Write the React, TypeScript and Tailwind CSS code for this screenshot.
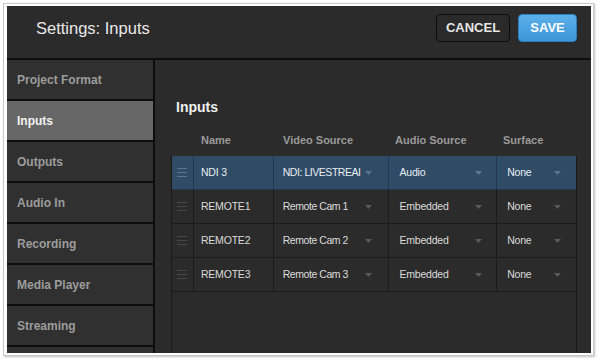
import React from "react";

const navItems = [
  "Project Format",
  "Inputs",
  "Outputs",
  "Audio In",
  "Recording",
  "Media Player",
  "Streaming",
  "",
];

const rows = [
  { name: "NDI 3", video: "NDI: LIVESTREAI", audio: "Audio", surface: "None", selected: true },
  { name: "REMOTE1", video: "Remote Cam 1", audio: "Embedded", surface: "None" },
  { name: "REMOTE2", video: "Remote Cam 2", audio: "Embedded", surface: "None" },
  { name: "REMOTE3", video: "Remote Cam 3", audio: "Embedded", surface: "None" },
];

const Caret = ({ selected }: { selected?: boolean }) => (
  <svg width="7" height="4" viewBox="0 0 7 4" className="shrink-0">
    <path d="M0 0h7L3.5 4z" fill={selected ? "#5c7690" : "#5a5a5a"} />
  </svg>
);

const Handle = ({ selected }: { selected?: boolean }) => (
  <div className="flex flex-col gap-[3px]">
    {[0, 1, 2].map((i) => (
      <div key={i} className={`h-px w-[10px] ${selected ? "bg-[#5a7590]" : "bg-[#474747]"}`} />
    ))}
  </div>
);

const App = () => (
  <div className="w-[598px] h-[361px] bg-white pl-[3px] pt-[3px] font-['Liberation_Sans',Arial,sans-serif]">
    <div className="w-[591px] h-[353px] border border-[#c9c9c9] bg-white px-[3px] py-[2px] shadow-[1px_1px_2px_rgba(0,0,0,0.25)]">
      <div className="w-[584px] h-[347px] bg-[#2b2b2b] flex flex-col overflow-hidden">
        {/* header */}
        <div className="h-[52px] shrink-0 flex items-start justify-between border-b-2 border-[#0e0e0e] box-content">
          <div className="pl-[29px] pt-[12px] text-[16.5px] leading-[20px] text-[#e8e8e8]">Settings: Inputs</div>
          <div className="flex gap-[8px] pt-[8px] pr-[14px]">
            <button className="w-[74px] h-[28px] rounded-[4px] border border-[#0c0c0c] bg-[#2a2a2a] text-[13px] font-bold text-[#e6e6e6]">
              CANCEL
            </button>
            <button className="w-[59px] h-[28px] rounded-[4px] border border-[#2e7fbf] bg-gradient-to-b from-[#5cb0ea] to-[#3c96d8] text-[13px] font-bold text-white">
              SAVE
            </button>
          </div>
        </div>

        <div className="flex flex-1 min-h-0">
          {/* sidebar */}
          <div className="w-[146px] shrink-0 border-r-2 border-[#0e0e0e] box-content overflow-hidden bg-[#0e0e0e]">
            {navItems.map((item, i) => (
              <div
                key={i}
                className={`h-[39px] mb-[2px] flex items-center pl-[10px] text-[12px] font-bold ${
                  item === "Inputs" ? "bg-[#676767] text-[#f2f2f2]" : "bg-[#303030] text-[#9c9c9c]"
                }`}
              >
                {item}
              </div>
            ))}
          </div>

          {/* content */}
          <div className="flex-1 flex flex-col pl-[16px] pr-[14px] pt-[39px]">
            <div className="pl-[5px] h-[16px] leading-[16px] text-[14px] font-bold text-[#f0f0f0]">Inputs</div>
            <div className="mt-[9px] h-[32px] flex items-center text-[11px] font-bold text-[#9a9a9a]">
              <div className="w-[22px]" />
              <div className="w-[80px] pl-[8px]">Name</div>
              <div className="w-[116px] pl-[10px]">Video Source</div>
              <div className="w-[108px] pl-[6px]">Audio Source</div>
              <div className="w-[80px] pl-[6px]">Surface</div>
            </div>
            <div className="flex-1 border-x border-[#1b1b1b] w-[406px]">
              {rows.map((r) => {
                const line = r.selected ? "border-[#213649]" : "border-[#1b1b1b]";
                return (
                  <div
                    key={r.name}
                    className={`h-[34px] flex border-b ${line} text-[10.5px] tracking-[-0.2px] whitespace-nowrap ${
                      r.selected ? "bg-[#2f4b65] text-[#e8eef4]" : "text-[#dcdcdc]"
                    }`}
                  >
                    <div className="w-[21px] flex items-center justify-center">
                      <Handle selected={r.selected} />
                    </div>
                    <div className={`w-[80px] border-l ${line} flex items-center pl-[7px]`}>{r.name}</div>
                    <div className={`w-[116px] border-l ${line} flex items-center justify-between pl-[9px] pr-[16px]`}>
                      <span className="tracking-[-0.45px]">{r.video}</span>
                      <Caret selected={r.selected} />
                    </div>
                    <div className={`w-[108px] border-l ${line} flex items-center justify-between pl-[10px] pr-[14px]`}>
                      <span>{r.audio}</span>
                      <Caret selected={r.selected} />
                    </div>
                    <div className={`w-[80px] border-l ${line} flex items-center justify-between pl-[10px] pr-[15px]`}>
                      <span>{r.surface}</span>
                      <Caret selected={r.selected} />
                    </div>
                  </div>
                );
              })}
            </div>
          </div>
        </div>
      </div>
    </div>
  </div>
);

export default App;
